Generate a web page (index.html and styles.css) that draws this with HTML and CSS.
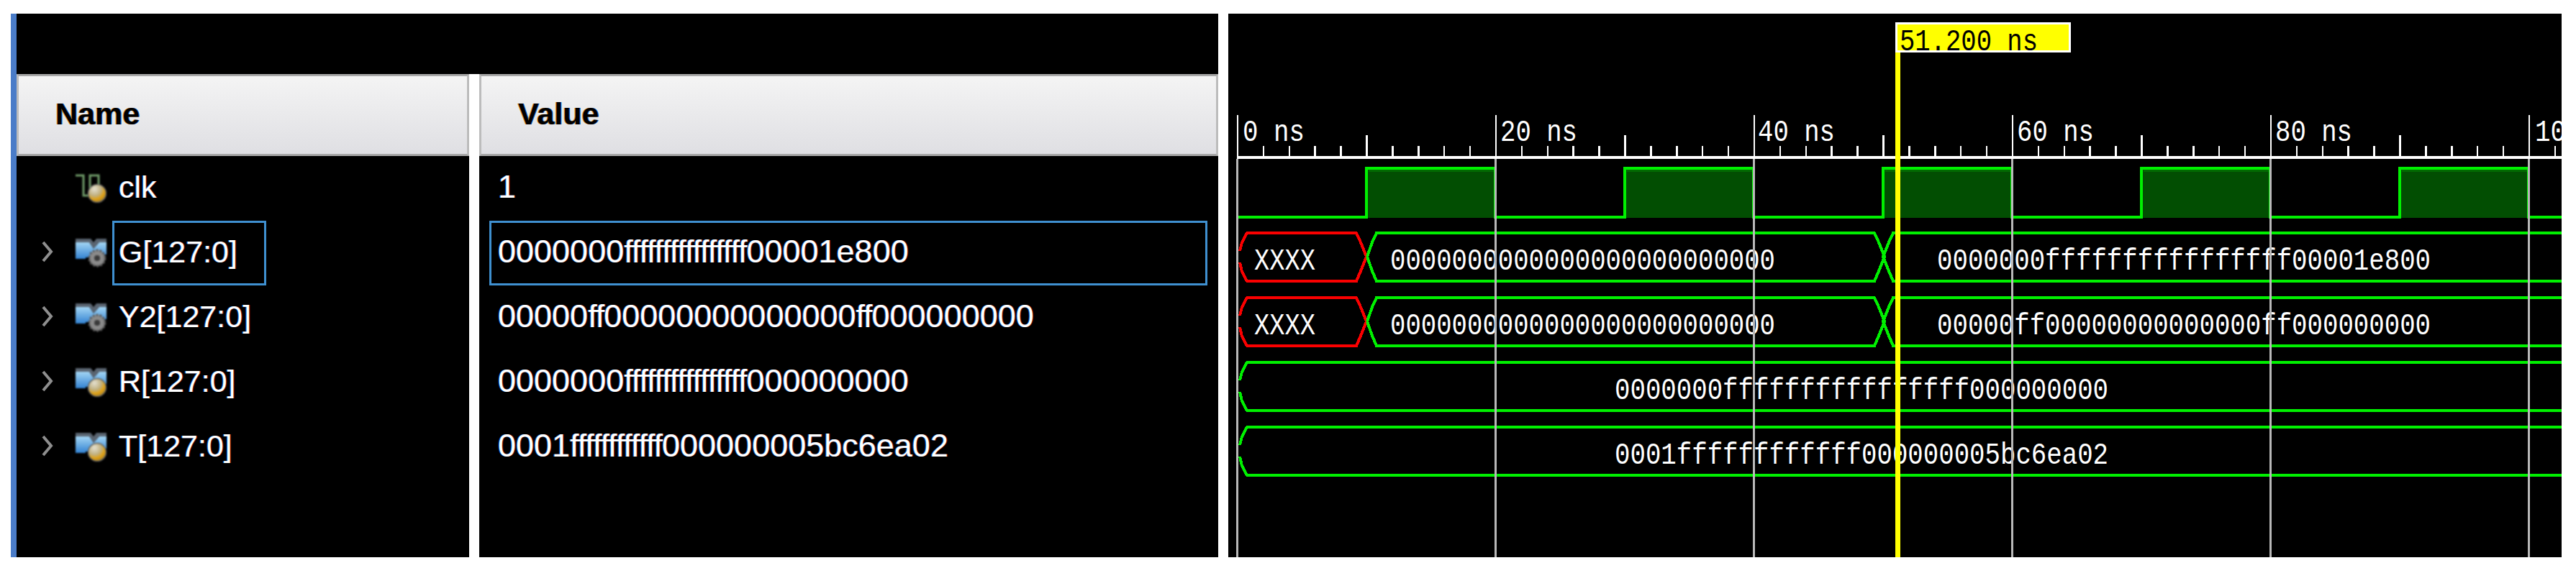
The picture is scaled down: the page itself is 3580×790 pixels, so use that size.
FILE: index.html
```html
<!DOCTYPE html>
<html lang="en">
<head>
<meta charset="utf-8">
<title>Waveform</title>
<link rel="stylesheet" href="styles.css">
</head>
<body>
<svg class="defs" width="0" height="0" aria-hidden="true">
  <defs>
    <linearGradient id="blue" x1="0" y1="0" x2="0" y2="1">
      <stop offset="0" stop-color="#a4d6f4"/>
      <stop offset="1" stop-color="#3282d2"/>
    </linearGradient>
    <radialGradient id="gold" cx="0.35" cy="0.25" r="0.85">
      <stop offset="0" stop-color="#e4e0d0"/>
      <stop offset="0.45" stop-color="#c0b080"/>
      <stop offset="0.7" stop-color="#e0a010"/>
      <stop offset="1" stop-color="#8a7440"/>
    </radialGradient>
    <g id="bus">
      <path class="ic-top" d="M0 0H21L25 5L29 0H43V5H33L25 14L19 5H0Z"/>
      <path class="ic-body" d="M0 5H19L25 14L33 5H43V22H36V26H14V28H0Z"/>
    </g>
    <g id="orb"><circle cx="30" cy="27" r="12.5" class="orb-core"/></g>
    <g id="gear">
      <circle cx="30" cy="27" r="11" class="gear-ring"/>
      <circle cx="30" cy="27" r="4" class="gear-hub"/>
    </g>
    <g id="chev"><polyline class="chev-line" points="2,2 13,15 2,28"/></g>
    <g id="decade">
      <path class="tick" d="M0 160V218M179.5 188V218M35.9 203V218M71.8 203V218M107.7 203V218M143.6 203V218M215.4 203V218M251.3 203V218M287.2 203V218M323.1 203V218"/>
    </g>
  </defs>
</svg>

<main class="names">
  <div class="names-top"></div>
  <div class="columns">
    <section class="col">
      <header class="head">Name</header>
      <div class="row">
        <span class="chev-slot"></span>
        <svg class="icon" viewBox="0 0 43 40"><path class="pulse" d="M0 2H11V30H20V2H32V16"/><use href="#orb"/></svg>
        <span class="label">clk</span>
      </div>
      <div class="row">
        <svg class="chev" viewBox="0 0 15 30"><use href="#chev"/></svg>
        <svg class="icon" viewBox="0 0 43 40"><use href="#bus"/><use href="#gear"/></svg>
        <span class="label sel-name">G[127:0]</span>
      </div>
      <div class="row">
        <svg class="chev" viewBox="0 0 15 30"><use href="#chev"/></svg>
        <svg class="icon" viewBox="0 0 43 40"><use href="#bus"/><use href="#gear"/></svg>
        <span class="label">Y2[127:0]</span>
      </div>
      <div class="row">
        <svg class="chev" viewBox="0 0 15 30"><use href="#chev"/></svg>
        <svg class="icon" viewBox="0 0 43 40"><use href="#bus"/><use href="#orb"/></svg>
        <span class="label">R[127:0]</span>
      </div>
      <div class="row">
        <svg class="chev" viewBox="0 0 15 30"><use href="#chev"/></svg>
        <svg class="icon" viewBox="0 0 43 40"><use href="#bus"/><use href="#orb"/></svg>
        <span class="label">T[127:0]</span>
      </div>
    </section>
    <section class="col">
      <header class="head">Value</header>
      <div class="row vrow"><span class="label vlabel">1</span></div>
      <div class="row vrow"><span class="label vlabel sel-val"><span>0000000<span class="fs">ffffffffffffffff</span>00001e800</span></span></div>
      <div class="row vrow"><span class="label vlabel"><span>00000<span class="fs">ff</span>00000000000000<span class="fs">ff</span>000000000</span></span></div>
      <div class="row vrow"><span class="label vlabel"><span>0000000<span class="fs">ffffffffffffffff</span>000000000</span></span></div>
      <div class="row vrow"><span class="label vlabel"><span>0001<span class="fs">ffffffffffff</span>000000005bc6ea02</span></span></div>
    </section>
  </div>
</main>

<section class="wave">
  <svg class="wave-svg" width="1853" height="756" viewBox="1707 19 1853 756">
    <!-- clock fill -->
    <g class="clk-fill">
      <rect x="1899" y="233" width="179" height="70"/>
      <rect x="2258" y="233" width="179" height="70"/>
      <rect x="2617" y="233" width="179" height="70"/>
      <rect x="2976" y="233" width="179" height="70"/>
      <rect x="3335" y="233" width="179" height="70"/>
    </g>
    <g class="clk-strip">
      <rect x="1902" y="235" width="176" height="4"/>
      <rect x="2261" y="235" width="176" height="4"/>
      <rect x="2620" y="235" width="176" height="4"/>
      <rect x="2979" y="235" width="176" height="4"/>
      <rect x="3338" y="235" width="176" height="4"/>
    </g>
    <polyline class="wire" points="1720,302 1899,302 1899,234 2078,234 2078,302 2258,302 2258,234 2437,234 2437,302 2617,302 2617,234 2796,234 2796,302 2976,302 2976,234 3155,234 3155,302 3335,302 3335,234 3514,234 3514,302 3560,302"/>

    <!-- G bus -->
    <polyline class="wire-x" points="1723,349 1726,337 1733,324 1885,324 1891,337 1899,357 1891,377 1885,391 1733,391 1726,378 1723,365"/>
    <polyline class="wire" points="1900,357 1907,337 1913,324 2605,324 2611,337 2619,357 2611,377 2605,391 1913,391 1907,377 1900,357"/>
    <polyline class="wire" points="3560,324 2631,324 2625,337 2617,357 2625,377 2631,391 3560,391"/>
    <!-- Y2 bus -->
    <polyline class="wire-x" points="1723,439 1726,427 1733,414 1885,414 1891,427 1899,447 1891,467 1885,481 1733,481 1726,468 1723,455"/>
    <polyline class="wire" points="1900,447 1907,427 1913,414 2605,414 2611,427 2619,447 2611,467 2605,481 1913,481 1907,467 1900,447"/>
    <polyline class="wire" points="3560,414 2631,414 2625,427 2617,447 2625,467 2631,481 3560,481"/>
    <!-- R bus -->
    <polyline class="wire" points="1723,529 1726,517 1733,504 3560,504"/>
    <polyline class="wire" points="1723,545 1726,558 1733,571 3560,571"/>
    <!-- T bus -->
    <polyline class="wire" points="1723,619 1726,607 1733,594 3560,594"/>
    <polyline class="wire" points="1723,635 1726,648 1733,661 3560,661"/>

    <!-- bus values -->
    <text class="wt" x="1743" y="375" textLength="85" lengthAdjust="spacingAndGlyphs">XXXX</text>
    <text class="wt" x="1932" y="375" textLength="535" lengthAdjust="spacingAndGlyphs">0000000000000000000000000</text>
    <text class="wt" x="2692" y="375" textLength="686" lengthAdjust="spacingAndGlyphs">0000000ffffffffffffffff00001e800</text>
    <text class="wt" x="1743" y="465" textLength="85" lengthAdjust="spacingAndGlyphs">XXXX</text>
    <text class="wt" x="1932" y="465" textLength="535" lengthAdjust="spacingAndGlyphs">0000000000000000000000000</text>
    <text class="wt" x="2692" y="465" textLength="686" lengthAdjust="spacingAndGlyphs">00000ff00000000000000ff000000000</text>
    <text class="wt" x="2244" y="555" textLength="686" lengthAdjust="spacingAndGlyphs">0000000ffffffffffffffff000000000</text>
    <text class="wt" x="2244" y="645" textLength="686" lengthAdjust="spacingAndGlyphs">0001ffffffffffff000000005bc6ea02</text>

    <!-- ruler -->
    <rect class="ruler" x="1719" y="217" width="1841" height="4"/>
    <use href="#decade" x="1720"/>
    <use href="#decade" x="2079"/>
    <use href="#decade" x="2438"/>
    <use href="#decade" x="2797"/>
    <use href="#decade" x="3156"/>
    <use href="#decade" x="3515"/>
    <text class="wt" x="1727" y="196" textLength="86" lengthAdjust="spacingAndGlyphs">0 ns</text>
    <text class="wt" x="2085" y="196" textLength="107" lengthAdjust="spacingAndGlyphs">20 ns</text>
    <text class="wt" x="2443" y="196" textLength="107" lengthAdjust="spacingAndGlyphs">40 ns</text>
    <text class="wt" x="2803" y="196" textLength="107" lengthAdjust="spacingAndGlyphs">60 ns</text>
    <text class="wt" x="3162" y="196" textLength="107" lengthAdjust="spacingAndGlyphs">80 ns</text>
    <text class="wt" x="3523" y="196" textLength="43" lengthAdjust="spacingAndGlyphs">10</text>

    <!-- grid -->
    <g class="grid">
      <rect x="1718" y="221" width="3" height="554"/>
      <rect x="2077" y="221" width="3" height="554"/>
      <rect x="2436" y="221" width="3" height="554"/>
      <rect x="2795" y="221" width="3" height="554"/>
      <rect x="3154" y="221" width="3" height="554"/>
      <rect x="3513" y="221" width="3" height="554"/>
    </g>

    <!-- cursor -->
    <rect class="cursor" x="2634" y="73" width="7" height="702"/>
    <rect class="cursor-box" x="2635.5" y="32.5" width="241" height="39"/>
    <text class="wt wt-dark" x="2640" y="70" textLength="192" lengthAdjust="spacingAndGlyphs">51.200 ns</text>
  </svg>
</section>
</body>
</html>
```

FILE: styles.css
```css
html, body {
  margin: 0;
  height: 790px;
  background: #fff;
  overflow: hidden;
}

body {
  box-sizing: border-box;
  display: flex;
  gap: 14px;
  padding: 19px 20px 15px 15px;
  font-family: "Liberation Sans", Arial, sans-serif;
}

.defs {
  position: absolute;
}

.names {
  width: 1678px;
  flex: none;
  box-sizing: border-box;
  border-left: 8px solid #4a7cc8;
  display: flex;
  flex-direction: column;
  background: #fff;
}

.names-top {
  height: 84px;
  background: #000;
}

.columns {
  flex: 1;
  display: grid;
  grid-template-columns: 629px 1027px;
  gap: 14px;
}

.col {
  background: #000;
  display: flex;
  flex-direction: column;
}

.head {
  box-sizing: border-box;
  height: 114px;
  display: flex;
  align-items: center;
  padding: 0 0 4px 51px;
  border: 3px solid #bcbcbc;
  border-top-color: #a8a8a8;
  border-bottom-color: #a8a8a8;
  background: linear-gradient(#f4f4f4, #dfdfe3);
  color: #000;
  font-size: 43px;
  font-weight: 700;
  text-shadow: -1px 0 #d08a30, 1px 0 #1a58a8;
}

.row {
  height: 90px;
  flex: none;
  display: flex;
  align-items: stretch;
}

.chev-slot {
  width: 15px;
  margin-left: 35px;
}

.chev {
  width: 15px;
  height: 30px;
  margin: 28px 0 0 35px;
  overflow: visible;
}

.chev-line {
  fill: none;
  stroke: #8e8e8e;
  stroke-width: 4;
}

.icon {
  width: 43px;
  height: 40px;
  margin: 25px 0 0 32px;
  filter: blur(0.8px);
}

.ic-top {
  fill: #5a6470;
}

.ic-body {
  fill: url(#blue);
}

.orb-core {
  fill: url(#gold);
  stroke: #5f5f5f;
  stroke-width: 1.5;
}

.pulse {
  fill: none;
  stroke: #6f9a68;
  stroke-width: 3;
}

.gear-ring {
  fill: #8a8a8a;
  stroke: #5c5c5c;
  stroke-width: 3;
  stroke-dasharray: 3 2;
}

.gear-hub {
  fill: #3a3a3a;
}

.label {
  box-sizing: border-box;
  height: 90px;
  display: flex;
  align-items: center;
  margin-left: 8px;
  padding: 0 5px 4px 6px;
  border: 3px solid transparent;
  color: #fff;
  font-size: 43px;
  white-space: nowrap;
  text-shadow: -1px 0 #0a58b0, 1px 0 #7a1408;
}

.vlabel {
  margin-left: 14px;
  padding-left: 9px;
  font-size: 45px;
}

.fs {
  letter-spacing: -1.1px;
}

.sel-name {
  width: 214px;
  border-color: #3f90d0;
}

.sel-val {
  width: 998px;
  border-color: #3f90d0;
}

.wave {
  width: 1853px;
  flex: none;
  background: #000;
}

.wave-svg {
  display: block;
  overflow: hidden;
}

.clk-fill rect {
  fill: #024e02;
}

.clk-strip rect {
  fill: #026a02;
}

.wire,
.wire-x {
  fill: none;
  stroke-width: 4;
  shape-rendering: crispEdges;
}

.wire {
  stroke: #00f000;
}

.wire-x {
  stroke: #fa0000;
}

.wt {
  font-family: "Liberation Mono", "DejaVu Sans Mono", monospace;
  font-size: 42px;
  fill: #fff;
}

.wt-dark {
  fill: #000;
}

.ruler {
  fill: #fff;
}

.tick {
  fill: none;
  stroke: #fff;
  stroke-width: 2.5;
  shape-rendering: crispEdges;
}

.grid rect {
  fill: #b8b8b8;
}

.cursor {
  fill: #ffff00;
}

.cursor-box {
  fill: #ffff00;
  stroke: #fff;
  stroke-width: 3;
}
```
